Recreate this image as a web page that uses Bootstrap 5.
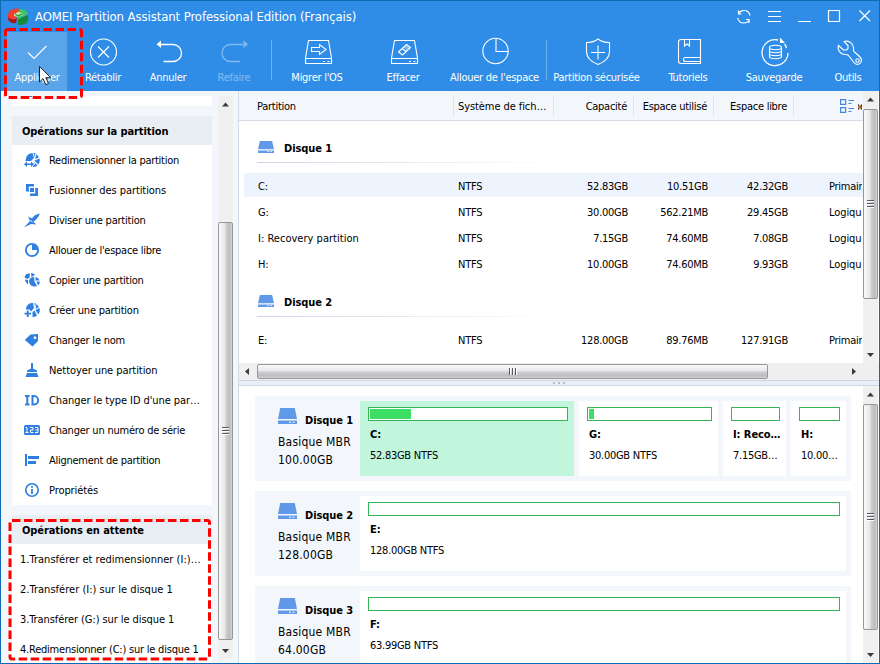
<!DOCTYPE html>
<html lang="fr">
<head>
<meta charset="utf-8">
<meta name="viewport" content="width=device-width, initial-scale=1">
<title>AOMEI Partition Assistant</title>
<link rel="stylesheet" href="https://cdn.jsdelivr.net/npm/bootstrap@5.3.0/dist/css/bootstrap.min.css">
<style>
  html, body { height: 664px; overflow: hidden; }
  body { font-family: "DejaVu Sans Condensed", "DejaVu Sans", sans-serif; font-stretch: condensed; font-size: 11px; line-height: 14px; letter-spacing: -.27px; color: #000; }
  svg { display: block; flex: none; }
  .ls-wide { letter-spacing: .02px; }
  .ls-mid { letter-spacing: -.08px; }
  .ls-snug { letter-spacing: -.22px; }
  .app-window { width: 880px; height: 664px; border: 1px solid #1069b3; background: #f3f6fb; }
  .app-head { height: 90px; background: #2f8de7; color: #fff; }
  .title-row { height: 31px; padding-left: 7px; }
  .title-text { font-size: 13px; letter-spacing: -.09px; margin-left: 6px; }
  .win-btns { margin-right: 8px; margin-bottom: 2px; }
  .tool-bar { display: grid; grid-template-columns: 60px 72px 58px 74px 92px 80px 103px 101px 82px 90px 58px; padding-left: 6px; height: 59px; }
  .tool { display: flex; flex-direction: column; align-items: center; white-space: nowrap; padding-top: 4px; }
  .tool svg { width: 32px; height: 32px; fill: none; stroke: #fff; stroke-width: 1.1; margin: 0 1px 3px 0; }
  .tool.active-tool { background: #5aa4ea; }
  .tool.dim { opacity: .4; }
  .tool.split { background: linear-gradient(#6fb1ee, #6fb1ee) 0 8px / 1px 40px no-repeat; }
  .side { width: 237px; padding: 5px 4px 0 11px; }
  .side-list { width: 200px; }
  .side-stub { height: 10px; margin-bottom: 10px; padding-left: 16px; }
  .stub-icon { width: 4px; height: 1px; background: #2f7fe0; }
  .side-title { height: 29px; padding: 2px 0 0 10px; background: #e9eef5; }
  .bold-t { font-weight: 700; letter-spacing: -.08px; }
  .pending-ops { margin-top: 10px; }
  .side-item { height: 30px; white-space: nowrap; padding-top: 2px; }
  .side-item svg { width: 16px; height: 16px; margin: 0 9px 2px 12px; fill: #2f7fe0; }
  .op-item { padding-left: 8px; }
  .v-scroll { width: 15px; background: #f0f0f0; flex: none; }
  .main-area .v-scroll { margin-right: 1px; }
  .v-scroll svg, .h-scroll svg { fill: #3b3b3b; }
  .v-thumb { border: 1px solid #979797; border-radius: 2px; background: linear-gradient(90deg, #fafafa, #e6e6e8 48%, #cfcfd2 52%, #bcbcc1 85%, #d8d8da); }
  .h-thumb { border: 1px solid #979797; border-radius: 2px; background: linear-gradient(#fafafa, #e6e6e8 48%, #cfcfd2 52%, #bcbcc1 85%, #d8d8da); width: 511px; height: 15px; }
  .side-scroll { height: 563px; margin-left: 6px; }
  .side-scroll .v-thumb { height: 418px; margin-top: 109px; }
  .main-area { border-left: 1px solid #d3dde9; background: #fff; }
  .grid-zone { height: 272px; }
  .grid-head { height: 30px; background: #f3f6fb; border-bottom: 1px solid #d5dde7; }
  .row-grid { display: grid; grid-template-columns: 215px 100px 80px 80px 80px 68px; align-items: center; white-space: nowrap; }
  .head-cell { height: 22px; display: flex; align-items: center; border-right: 1px solid #dfe5ed; padding-top: 2px; }
  .head-first { padding-left: 18px; }
  .head-num { justify-content: flex-end; padding-right: 6px; }
  .type-clip { width: 4px; margin-left: 4px; overflow: hidden; padding-top: 2px; }
  .type-clip span { margin-left: -14px; }
  .grid-body { height: 242px; }
  .disk-head { height: 52px; padding: 20px 0 0 19px; }
  .disk-head svg { margin: 0 10px 3px 0; }
  .disk-head .bold-t { padding-top: 1px; }
  .disk-rule { height: 1px; width: 305px; margin: 6px 0 0 -1px; background: linear-gradient(90deg, #ccd7e6, #fff); }
  .part-row { height: 24px; margin-left: 5px; margin-bottom: 2px; grid-template-columns: 209px 100px 80px 80px 80px 69px; padding-top: 3px; }
  .part-row > :first-child { padding-left: 14px; }
  .part-row > :nth-child(2) { padding-left: 5px; }
  .num { text-align: right; padding-right: 5px; }
  .part-row > :last-child { padding-left: 36px; width: 69px; overflow: hidden; }
  .picked { background: #eef4fe; }
  .grid-scroll { height: 272px; }
  .grid-scroll .v-thumb { height: 190px; margin-top: 1px; }
  .h-scroll { height: 17px; background: #efefef; padding: 1px 16px 1px 0; }
  .splitter { height: 6px; background: #e9eff7; border-top: 1px solid #ccd8e6; border-bottom: 1px solid #ccd8e6; gap: 3px; }
  .splitter i { width: 2px; height: 2px; background: #b4bfcd; }
  .map-zone { height: 277px; }
  .map-zone .v-thumb { height: 226px; margin-top: 1px; }
  .map-list { padding: 10px 12px 0 16px; gap: 10px; }
  .disk-card { height: 85px; flex: none; background: #f3f6fb; padding: 5px 5px 5px 0; }
  .disk-info { width: 105px; padding: 7px 0 0 23px; flex: none; }
  .disk-name { margin-left: 8px; padding-top: 6px; height: 25px; }
  .info-line { font-size: 12px; letter-spacing: .2px; line-height: 18px; white-space: nowrap; }
  .cell-row { gap: 5px; }
  .part-cell { background: #fff; padding: 6px 6px 0 8px; overflow: hidden; white-space: nowrap; }
  .part-cell.sel { background: #c2f6dc; }
  .use-bar { height: 14px; border: 1px solid #35b558; background: #fff; padding: 1px; }
  .use-fill { height: 10px; background: #3cdf63; }
  .part-name { padding-left: 2px; margin-top: 7px; }
  .part-size { padding-left: 2px; margin-top: 7px; }
  .overlay { position: absolute; left: 0; top: 0; z-index: 5; pointer-events: none; }
</style>
<script src="https://cdn.jsdelivr.net/npm/bootstrap@5.3.0/dist/js/bootstrap.bundle.min.js"></script>
</head>
<body>
<svg width="0" height="0" class="position-absolute">
  <symbol id="disk" viewBox="0 0 19 16" preserveAspectRatio="none"><path d="M2.200 0h14.600L19 11H0z M0 12.500h19V16H0z" fill="#6199e9"/><path d="M11 13.800h2v1h-2zM14.500 13.800h2v1h-2z" fill="#fff"/></symbol>
  <symbol id="up" viewBox="0 0 15 17"><path d="M7.500 6.500l3.500 4H4z"/></symbol>
  <symbol id="down" viewBox="0 0 15 17"><path d="M4 7h7l-3.500 4z"/></symbol>
  <symbol id="grip" viewBox="0 0 8 8"><path d="M0 .5h7M0 3.500h7M0 6.500h7" stroke="#55585c"/><path d="M0 1.500h7M0 4.500h7M0 7.500h7" stroke="#fff"/></symbol>
</svg>
<div class="app-window d-flex flex-column overflow-hidden">
  <header class="app-head">
    <div class="title-row d-flex align-items-center">
      <svg width="21" height="18" viewBox="0 0 21 18"><path d="M0 6v5c1 3 4 5 8 4l1-5z" fill="#a91616"/><path d="M10 11v6c6 0 10-2 10-5V7z" fill="#168a3b"/><path d="M0 7C0 3 4 .500 10 .500l2 2.500-2 3-3 2 2 3c-5 1-9 0-9-4z" fill="#ee3f31"/><path d="M12 1c5 0 7 2 8 5l-6 3-5 3 1-4 4-2-4-2z" fill="#3cc467"/><path d="M6 6l4-2 4 1 1 2-5 2-4-1z" fill="#d7e6a2"/><path d="M7 6l3 2 4-2" fill="none" stroke="#2ba344" stroke-width="1.500"/></svg>
      <span class="title-text">AOMEI Partition Assistant Professional Edition (Français)</span>
      <div class="win-btns ms-auto">
        <svg width="136" height="18" viewBox="735 7 136 18" fill="none" stroke="#fff" stroke-width="1.200"><path d="M738.500 10.500v3.500h3M738.700 13.500c1-2 3-3 5.300-3 3.200 0 5.300 2 6 5M749 23v-3.500h-3M749.500 19.500c-1 2-2.800 3.500-5.500 3.500-3.200 0-5.700-2-6.200-5"/><path d="M768 11.500h13M768 16.500h13M768 21.500h13M798 21.500h13M828.500 10.500h11v11h-11zM859.500 10.500l10.500 10.500M870 10.500l-10.500 10.500"/></svg>
      </div>
    </div>
    <div class="tool-bar">
      <div class="tool active-tool"><svg viewBox="0 0 32 32"><path d="M7 16.500l6 6L25.500 10"/></svg>Appliquer</div>
      <div class="tool"><svg viewBox="0 0 32 32"><circle cx="16.500" cy="16" r="13"/><path d="M11 10.500l11 11M22 10.500l-11 11"/></svg>Rétablir</div>
      <div class="tool"><svg viewBox="0 0 32 32"><path d="M8 8.500h13a8.500 8.500 0 0 1 0 17H11.500" stroke-width="1.300"/><path d="M9 4.500v7.500L4.500 8.300z" fill="#fff" stroke="none"/></svg>Annuler</div>
      <div class="tool dim"><svg viewBox="0 0 32 32"><path d="M25 8.500H12.500a8.500 8.500 0 0 0 0 17H22" stroke-width="1.300"/><path d="M25.500 4.500v7.500L30 8.300z" fill="#fff" stroke="none"/></svg>Refaire</div>
      <div class="tool split"><svg viewBox="0 0 32 32"><path d="M7.500 4.500h20l3 17.500v5.500h-26v-5.500zM5 22.500h26M22 25.500h2M26.500 25.500h2M10.500 11.500h8V8.500l6.500 5-6.500 5v-3h-8z"/></svg>Migrer l'OS</div>
      <div class="tool"><svg viewBox="0 0 32 32"><path d="M7.500 4.500h20l3 17.500v5.500h-26v-5.500zM5 22.500h26M22 25.500h2M26.500 25.500h2"/><path d="M11.500 16l8-7.500 4 3-8 7.500zM15 12.500l4.500 3"/><path d="M16.500 11.500l3-2.500 3.500 2.500-3 2.500z" fill="#fff" fill-opacity=".4" stroke="none"/></svg>Effacer</div>
      <div class="tool"><svg viewBox="0 0 32 32"><circle cx="17.500" cy="15" r="12.700"/><path d="M18 2.500v13h12"/></svg>Allouer de l'espace</div>
      <div class="tool split"><svg viewBox="0 0 32 32"><path d="M18 3c-3 2.500-7 3.500-11.500 3.500v9c0 6.500 5 10.500 11.500 13 6.500-2.500 11.500-6.500 11.500-13v-9C25 6.500 21 5.500 18 3zM18 9.500v14M11 16.500h14"/></svg>Partition sécurisée</div>
      <div class="tool"><svg viewBox="0 0 32 32"><path d="M9.500 3.500h19v24H9a2.500 2.500 0 0 1-2.500-2.500V6a2.500 2.500 0 0 1 3-2.500zM12.500 3.500V10l2.500-2 2.500 2V3.500M28 21.500H13.500a2 2 0 0 0 0 4H28"/></svg>Tutoriels</div>
      <div class="tool"><svg viewBox="0 0 32 32"><path d="M20 4A13 13 0 1 0 30 17M28.500 12a13 13 0 0 0-2-4" stroke-width="1.300"/><path d="M22 1.500v5.500h5z" fill="#fff" stroke="none"/><ellipse cx="17.500" cy="11.500" rx="6" ry="2.200"/><path d="M11.500 11.500v9c0 3 12 3 12 0v-9M11.500 14.500c0 3 12 3 12 0M11.500 17.500c0 3 12 3 12 0"/></svg>Sauvegarde</div>
      <div class="tool"><svg viewBox="0 0 32 32"><path d="M12 5.500c4-1.500 9 1.500 9.500 6 .2 2-.5 3 .5 4l6 5.500c2.500 2.500 1.500 6-1 7-2 .7-4 0-5-1.500l-5.500-7c-1-1-2-1-3.500-1-4.500 0-8-4.500-6.500-9l5 4.500h3l1.500-1.500v-3z"/><circle cx="25.500" cy="24.500" r="1.700"/></svg>Outils</div>
    </div>
  </header>

  <div class="d-flex flex-grow-1 overflow-hidden">
    <aside class="side d-flex flex-shrink-0 overflow-hidden">
      <div class="side-list">
        <div class="side-stub bg-white"><div class="stub-icon"></div></div>
        <section class="bg-white">
          <div class="side-title d-flex align-items-center bold-t ls-wide">Opérations sur la partition</div>
          <div class="side-item d-flex align-items-center"><svg viewBox="0 0 16 16"><path d="M2 6.500a6.500 6.500 0 0 1 6.500-5.500l1.500 5-3 3H1.500zM9.500 1l2 .300-.700 3.700zM12.500 2L15 5.500 11 7zM15.500 6.500a7 7 0 0 1-1.200 6L10.500 8.500z"/><path d="M9.500 9.500l4 4a7 7 0 0 1-5 1.500L11 12z"/><path d="M0 12.300L3 9.500v2h4v-2l3 2.800-3 2.700v-2H3v2z"/></svg>Redimensionner la partition</div>
          <div class="side-item ls-mid d-flex align-items-center"><svg viewBox="0 0 16 16"><path d="M2 2h8v2.500H4.800V8H5v1.500H2zM14 6v8H6v-2.500h5.200V6z"/><path d="M6 6h4v4H6z"/></svg>Fusionner des partitions</div>
          <div class="side-item ls-snug d-flex align-items-center"><svg viewBox="0 0 16 16"><path d="M16 1.500c-4 .500-6.500 2.500-8 5L4 4.500 6 9 0 15.500 7 12l5 .500-2.500-3c3-2 4.500-4 6.500-8z"/><path d="M6.500 8.500L8.500 10" stroke="#fff"/></svg>Diviser une partition</div>
          <div class="side-item d-flex align-items-center"><svg viewBox="0 0 16 16"><circle cx="8" cy="8" r="6.100" fill="none" stroke="#2f7fe0" stroke-width="1.900"/><path d="M8 2.500V8h5.500A5.500 5.500 0 0 0 8 2.500z"/></svg>Allouer de l'espace libre</div>
          <div class="side-item ls-snug d-flex align-items-center"><svg viewBox="0 0 16 16"><path d="M.5 5.500A5 5 0 0 1 6 1.500l-.500 4L3.500 7zM7 1a5 5 0 0 1 4 2L7.500 5zM1 7.500l3 .5v4.500a6 6 0 0 1-3-5z"/><path d="M5 9a5 5 0 0 1 5-4l.500 4.500 2.500 4.500A5.500 5.500 0 0 1 5 9zM11.500 5a5 5 0 0 1 4 3.500h-4zM12.500 9.500h3.300a5 5 0 0 1-1.800 4z"/></svg>Copier une partition</div>
          <div class="side-item ls-snug d-flex align-items-center"><svg viewBox="0 0 16 16"><path d="M2 6.500A6.500 6.500 0 0 1 9 1l1 5-3 3.500-1.500-2H2zM10.300 1l1.500.500-.500 3.500zM12.500 2L15 5l-3.500 2zM15.500 6a7 7 0 0 1-1.200 6.500L11.500 8zM8.500 10l2-1.500 2.500 5a7 7 0 0 1-4.500 1.500z"/><path d="M2.800 8.500h1.900v2.300H7v1.700H4.700V15H2.800v-2.500H.5v-1.700h2.300z"/></svg>Créer une partition</div>
          <div class="side-item ls-snug d-flex align-items-center"><svg viewBox="0 0 16 16"><path fill-rule="evenodd" d="M.8 8L6.500 2.500 14 2v7L8.500 14.500zM9.800 4.500v2.600h2.400V4.500z"/></svg>Changer le nom</div>
          <div class="side-item ls-mid d-flex align-items-center"><svg viewBox="0 0 16 16"><path d="M7 1h2v5.500l4 2V10H3V8.500l4-2zM3 11h10l1.500 4h-13z"/></svg>Nettoyer une partition</div>
          <div class="side-item ls-mid d-flex align-items-center"><svg viewBox="0 0 16 16"><path d="M1 4h4.500M1 12.500h4.500M3.300 4v8.500M8.500 4h1.500c5.500 0 5.500 8.500 0 8.500H8.500z" fill="none" stroke="#2f7fe0" stroke-width="2"/></svg>Changer le type ID d'une par…</div>
          <div class="side-item ls-snug d-flex align-items-center"><svg viewBox="0 0 16 16"><rect y="3" width="16" height="10" rx="1.500"/><path d="M1.500 5.500H3V10M1.500 10.500h3M6 5.500h3V8H6.500v2.500h3M11 5.500h3v5h-3M11.500 8H14" fill="none" stroke="#fff"/></svg>Changer un numéro de série</div>
          <div class="side-item d-flex align-items-center"><svg viewBox="0 0 16 16"><path d="M1 2h2v12H1zM4 4h11v3H4zM4 9h8v3H4z"/></svg>Alignement de partition</div>
          <div class="side-item ls-mid d-flex align-items-center"><svg viewBox="0 0 16 16"><circle cx="8" cy="8" r="6.200" fill="none" stroke="#2f7fe0" stroke-width="1.600"/><path d="M7.100 4h1.800v1.800H7.100zM7.100 7h1.800v5H7.100z"/></svg>Propriétés</div>
        </section>
        <section class="pending-ops bg-white">
          <div class="side-title d-flex align-items-center bold-t ls-wide">Opérations en attente</div>
          <div class="side-item op-item ls-wide d-flex align-items-center">1.Transférer et redimensionner (I:)…</div>
          <div class="side-item op-item ls-wide d-flex align-items-center">2.Transférer (I:) sur le disque 1</div>
          <div class="side-item op-item ls-mid d-flex align-items-center">3.Transférer (G:) sur le disque 1</div>
          <div class="side-item op-item ls-snug d-flex align-items-center">4.Redimensionner (C:) sur le disque 1</div>
        </section>
      </div>
      <div class="v-scroll side-scroll d-flex flex-column">
        <svg width="15" height="17"><use href="#up"/></svg>
        <div class="v-thumb d-flex align-items-center justify-content-center"><svg width="8" height="8"><use href="#grip"/></svg></div>
        <svg width="15" height="17" class="mt-auto"><use href="#down"/></svg>
      </div>
    </aside>

    <main class="main-area d-flex flex-column flex-grow-1 overflow-hidden">
      <div class="grid-zone d-flex flex-shrink-0">
        <div class="flex-grow-1 overflow-hidden">
          <div class="grid-head row-grid">
            <div class="head-cell head-first">Partition</div>
            <div class="head-cell ls-mid ps-1">Système de fich…</div>
            <div class="head-cell head-num">Capacité</div>
            <div class="head-cell head-num">Espace utilisé</div>
            <div class="head-cell head-num">Espace libre</div>
            <div class="d-flex align-items-center justify-content-end"><svg width="14" height="14" viewBox="0 0 14 14" fill="none" stroke="#3f86e8" stroke-width="1.200"><path d="M.6.600h5v4.800h-5zM.6 8.600h5v4.800h-5zM8.500 1.500H14M8.500 4.500h3M8.500 9.500H14M8.500 12.500h3"/></svg><div class="type-clip"><span>Type</span></div></div>
          </div>
          <div class="grid-body overflow-hidden">
            <div class="disk-head"><div class="d-flex align-items-center"><svg width="16" height="12"><use href="#disk"/></svg><span class="bold-t">Disque 1</span></div><div class="disk-rule"></div></div>
            <div class="part-row row-grid picked"><span>C:</span><span>NTFS</span><span class="num">52.83GB</span><span class="num">10.51GB</span><span class="num">42.32GB</span><span>Primaire</span></div>
            <div class="part-row row-grid"><span>G:</span><span>NTFS</span><span class="num">30.00GB</span><span class="num">562.21MB</span><span class="num">29.45GB</span><span class="ls-mid">Logique</span></div>
            <div class="part-row row-grid"><span class="ls-wide">I: Recovery partition</span><span>NTFS</span><span class="num">7.15GB</span><span class="num">74.60MB</span><span class="num">7.08GB</span><span class="ls-mid">Logique</span></div>
            <div class="part-row row-grid mb-0"><span>H:</span><span>NTFS</span><span class="num">10.00GB</span><span class="num">74.60MB</span><span class="num">9.93GB</span><span class="ls-mid">Logique</span></div>
            <div class="disk-head"><div class="d-flex align-items-center"><svg width="16" height="12"><use href="#disk"/></svg><span class="bold-t">Disque 2</span></div><div class="disk-rule"></div></div>
            <div class="part-row row-grid"><span>E:</span><span>NTFS</span><span class="num">128.00GB</span><span class="num">89.76MB</span><span class="num">127.91GB</span><span>Primaire</span></div>
          </div>
        </div>
        <div class="v-scroll grid-scroll d-flex flex-column">
          <svg width="15" height="17"><use href="#up"/></svg>
          <div class="v-thumb d-flex align-items-center justify-content-center"><svg width="8" height="8"><use href="#grip"/></svg></div>
          <svg width="15" height="17" class="mt-auto"><use href="#down"/></svg>
        </div>
      </div>
      <div class="h-scroll d-flex align-items-center">
        <svg width="18" height="15"><path d="M10 4v7L6 7.500z"/></svg>
        <div class="h-thumb d-flex align-items-center justify-content-center"><svg width="8" height="8" viewBox="0 0 8 8"><path d="M.5 0v7M3.500 0v7M6.500 0v7" stroke="#55585c"/><path d="M1.500 0v7M4.500 0v7M7.500 0v7" stroke="#fff"/></svg></div>
        <svg width="18" height="15" class="ms-auto"><path d="M7 4v7l4-3.500z"/></svg>
      </div>
      <div class="splitter d-flex align-items-center justify-content-center"><i></i><i></i><i></i></div>
      <div class="map-zone d-flex overflow-hidden">
        <div class="map-list d-flex flex-column flex-grow-1 overflow-hidden">
          <div class="disk-card d-flex">
            <div class="disk-info"><div class="d-flex"><svg width="19" height="16"><use href="#disk"/></svg><span class="bold-t disk-name">Disque 1</span></div><div class="info-line">Basique MBR</div><div class="info-line">100.00GB</div></div>
            <div class="cell-row d-flex">
              <div class="part-cell sel" style="width:214px"><div class="use-bar"><div class="use-fill" style="width:41px"></div></div><div class="part-name bold-t">C:</div><div class="part-size">52.83GB NTFS</div></div>
              <div class="part-cell" style="width:139px"><div class="use-bar"><div class="use-fill" style="width:5px"></div></div><div class="part-name bold-t">G:</div><div class="part-size">30.00GB NTFS</div></div>
              <div class="part-cell" style="width:63px"><div class="use-bar"></div><div class="part-name bold-t">I: Reco…</div><div class="part-size">7.15GB…</div></div>
              <div class="part-cell" style="width:55px"><div class="use-bar"></div><div class="part-name bold-t">H:</div><div class="part-size">10.00…</div></div>
            </div>
          </div>
          <div class="disk-card d-flex">
            <div class="disk-info"><div class="d-flex"><svg width="19" height="16"><use href="#disk"/></svg><span class="bold-t disk-name">Disque 2</span></div><div class="info-line">Basique MBR</div><div class="info-line">128.00GB</div></div>
            <div class="part-cell flex-grow-1"><div class="use-bar"></div><div class="part-name bold-t">E:</div><div class="part-size">128.00GB NTFS</div></div>
          </div>
          <div class="disk-card d-flex">
            <div class="disk-info"><div class="d-flex"><svg width="19" height="16"><use href="#disk"/></svg><span class="bold-t disk-name">Disque 3</span></div><div class="info-line">Basique MBR</div><div class="info-line">64.00GB</div></div>
            <div class="part-cell flex-grow-1"><div class="use-bar"></div><div class="part-name bold-t">F:</div><div class="part-size">63.99GB NTFS</div></div>
          </div>
        </div>
        <div class="v-scroll d-flex flex-column">
          <svg width="15" height="17"><use href="#up"/></svg>
          <div class="v-thumb d-flex align-items-center justify-content-center"><svg width="8" height="8"><use href="#grip"/></svg></div>
          <svg width="15" height="17" class="mt-auto"><use href="#down"/></svg>
        </div>
      </div>
    </main>
  </div>
</div>
<svg class="overlay" width="880" height="664" fill="none" stroke="#f00" stroke-width="3" stroke-dasharray="8.500 3.500">
  <rect x="5.500" y="29.500" width="76" height="68" rx="2"/>
  <rect x="10" y="520.500" width="199.500" height="138.500" rx="2"/>
  <path d="M39.500 66.500v15.500l3.600-3.300 2.700 6 2.700-1.200-2.700-5.800h5z" fill="#fff" stroke="#222" stroke-width="1" stroke-dasharray="none"/>
</svg>
</body>
</html>
